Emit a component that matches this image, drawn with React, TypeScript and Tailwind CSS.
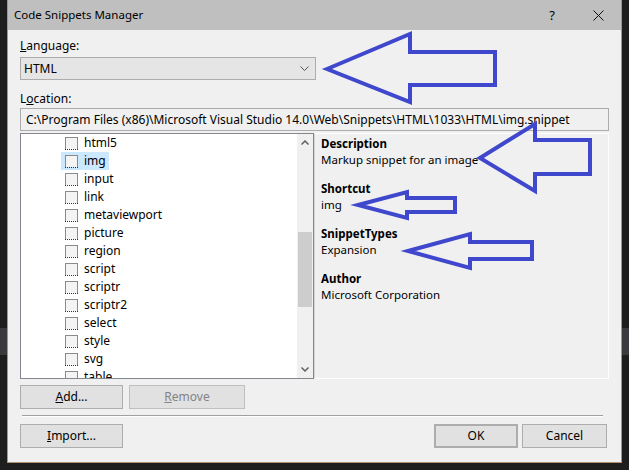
const snippets = [
  "html5",
  "img",
  "input",
  "link",
  "metaviewport",
  "picture",
  "region",
  "script",
  "scriptr",
  "scriptr2",
  "select",
  "style",
  "svg",
  "table",
];

const details = [
  { label: "Description", value: "Markup snippet for an image" },
  { label: "Shortcut", value: "img" },
  { label: "SnippetTypes", value: "Expansion" },
  { label: "Author", value: "Microsoft Corporation" },
];

function Checkbox() {
  return (
    <span className="flex h-[13px] w-[13px] flex-col">
      <span className="h-[12px] border-x border-t border-[#8a8a8a] bg-[#f4f4f4]" />
      <span className="border-t border-dotted border-[#333]" />
    </span>
  );
}

function Button({
  children,
  className = "",
}: {
  children: React.ReactNode;
  className?: string;
}) {
  return (
    <div
      className={`flex h-[24px] items-center justify-center border border-[#adadad] bg-[#e1e1e1] ${className}`}
    >
      {children}
    </div>
  );
}

function SideStrip() {
  return (
    <div className="flex w-[7px] flex-col bg-[#1e1e1e]">
      <div className="h-[328px]" />
      <div className="h-[27px] bg-[#3a3a3f]" />
      <div className="flex-1" />
    </div>
  );
}

export default function App() {
  return (
    <div className="relative flex h-[470px] w-[629px] overflow-hidden bg-[#1e1e1e] font-['Noto_Sans','Open_Sans',sans-serif] text-[12px] leading-[16px] text-black">
      <SideStrip />

      <div className="flex h-[463px] w-[615px] flex-col border-x border-b border-[#b4926f] bg-[#f0f0f0]">
        {/* title bar */}
        <div className="flex h-[30px] items-center bg-[#bfbfbf] pl-[6px]">
          <span className="flex-1 text-[11.5px]">Code Snippets Manager</span>
          <span className="flex h-[30px] w-[46px] items-center justify-center text-[13px]">?</span>
          <span className="flex h-[30px] w-[46px] items-center justify-center">
            <svg width="11" height="11" viewBox="0 0 11 11">
              <path d="M0.5 0.5 L10.5 10.5 M10.5 0.5 L0.5 10.5" stroke="#111" strokeWidth="1" />
            </svg>
          </span>
        </div>

        <div className="flex flex-col px-[12px] pt-[8px]">
          <div>
            <span className="underline">L</span>anguage:
          </div>
          <div className="mt-[3px] flex h-[23px] w-[296px] items-center justify-between border border-[#acacac] bg-[#e5e5e5] pl-[3px] pr-[6px]">
            <span>HTML</span>
            <svg width="9" height="5" viewBox="0 0 9 5">
              <path d="M0.5 0.5 L4.5 4.5 L8.5 0.5" fill="none" stroke="#555" strokeWidth="1" />
            </svg>
          </div>

          <div className="mt-[11px]">
            L<span className="underline">o</span>cation:
          </div>
          <div className="mt-[1px] flex h-[23px] items-center border border-[#acacac] bg-[#f0f0f0] pl-[5px]">
            C:\Program Files (x86)\Microsoft Visual Studio 14.0\Web\Snippets\HTML\1033\HTML\img.snippet
          </div>

          <div className="mt-[2px] flex h-[246px]">
            {/* tree */}
            <div className="flex w-[294px] overflow-hidden border border-[#828790] bg-white">
              <div className="flex flex-1 flex-col overflow-hidden">
                {snippets.map((s) => (
                  <div key={s} className="flex h-[18px] shrink-0 items-center pl-[40px]">
                    <div
                      className={`flex h-[18px] items-center gap-[6px] pl-[4px] pr-[3px] ${
                        s === "img" ? "bg-[#cce8ff]" : ""
                      }`}
                    >
                      <Checkbox />
                      <span>{s}</span>
                    </div>
                  </div>
                ))}
              </div>
              <div className="flex w-[16px] flex-col bg-[#f0f0f0]">
                <div className="flex h-[17px] items-center justify-center">
                  <svg width="8" height="5" viewBox="0 0 8 5">
                    <path d="M0.5 4.5 L4 1 L7.5 4.5" fill="none" stroke="#606060" strokeWidth="1.5" />
                  </svg>
                </div>
                <div className="flex-1">
                  <div className="ml-[1px] mt-[81px] h-[75px] w-[14px] bg-[#cdcdcd]" />
                </div>
                <div className="flex h-[17px] items-center justify-center">
                  <svg width="8" height="5" viewBox="0 0 8 5">
                    <path d="M0.5 0.5 L4 4 L7.5 0.5" fill="none" stroke="#606060" strokeWidth="1.5" />
                  </svg>
                </div>
              </div>
            </div>

            {/* details */}
            <div className="flex flex-1 flex-col gap-[14px] border border-l-[#d5d5d5] border-[#fdfdfd] pl-[6px] pt-[2px] text-[11.5px] leading-[15.5px]">
              {details.map((d) => (
                <div key={d.label} className="flex flex-col">
                  <span className="font-bold">{d.label}</span>
                  <span>{d.value}</span>
                </div>
              ))}
            </div>
          </div>

          <div className="mt-[6px] flex gap-[6px]">
            <Button className="w-[103px]">
              <span>
                <span className="underline">A</span>dd...
              </span>
            </Button>
            <Button className="w-[116px] border-[#bfbfbf] bg-[#cccccc] text-[#838383]">
              <span>
                <span className="underline">R</span>emove
              </span>
            </Button>
          </div>

          <div className="mx-[2px] mt-[6px] w-[581px] border-t border-b border-t-[#a0a0a0] border-b-white" />

          <div className="mt-[7px] flex items-center pr-[2px]">
            <Button className="w-[103px]">
              <span>
                <span className="underline">I</span>mport...
              </span>
            </Button>
            <div className="flex-1" />
            <Button className="w-[84px] border-2 border-[#0078d7]">OK</Button>
            <Button className="ml-[4px] w-[85px]">Cancel</Button>
          </div>
        </div>
      </div>

      <SideStrip />

      {/* annotation arrows drawn over the screenshot */}
      <svg
        className="pointer-events-none absolute inset-0"
        width="629"
        height="470"
        viewBox="0 0 629 470"
      >
        <g fill="none" stroke="#3f48cc" strokeWidth="4" strokeLinejoin="miter">
          <path d="M327 69 L410 34 L410 52 L495 52 L495 85 L410 85 L410 102 Z" />
          <path d="M480 158 L535 124 L535 140 L590 140 L590 174 L535 174 L535 191 Z" />
          <path d="M358 205 L407 192 L407 198 L455 198 L455 212 L407 212 L407 218 Z" />
          <path d="M408 251 L470 234 L470 242 L532 242 L532 259 L470 259 L470 268 Z" />
        </g>
      </svg>
    </div>
  );
}
